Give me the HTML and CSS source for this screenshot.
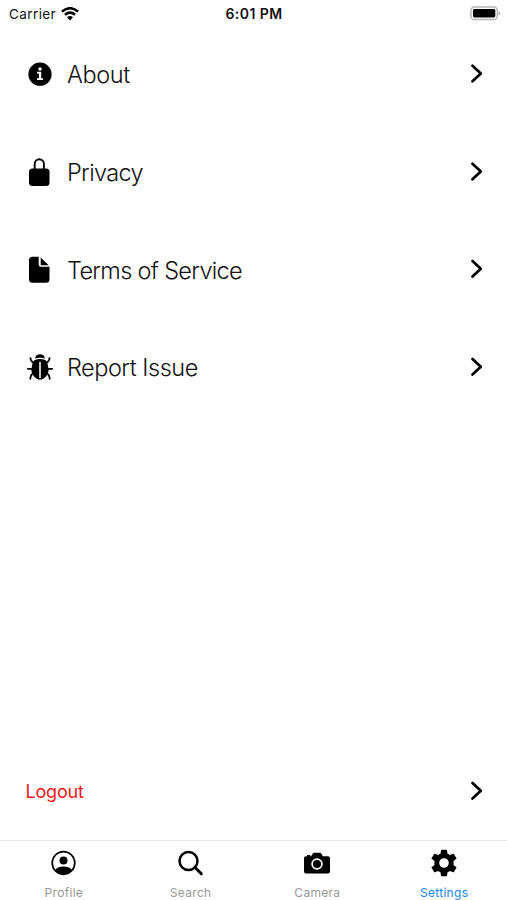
FILE: index.html
```html
<!DOCTYPE html>
<html lang="en">
<head>
<meta charset="utf-8">
<title>Settings</title>
<link rel="stylesheet" href="styles.css">
</head>
<body>
<div class="screen">
  <header class="status">
    <div class="carrier"><span>Carrier</span>
      <svg class="wifi" width="18" height="14" viewBox="0 0 18 14"><g fill="none" stroke="#000" stroke-width="2.5"><path d="M.9 4.600Q9-2.200 17.100 4.600"/><path d="M3.900 7.800Q9 3.500 14.100 7.800"/></g><path d="M6 10.300Q9 7.700 12 10.300L9 13.400z"/></svg>
    </div>
    <span class="time">6:01 PM</span>
    <svg class="battery" width="31" height="15" viewBox="0 0 31 15"><rect x=".9" y=".9" width="26.4" height="12.6" rx="3.6" fill="#fff" stroke="#b4b4b4" stroke-width="1.500"/><rect x="3" y="3" width="22.300" height="8.500" rx="1.400"/><path d="M28.600 5v4.500q1.800-.7 1.800-2.250T28.600 5z" fill="#b4b4b4"/></svg>
  </header>
  <main class="menu">
    <a class="row">
      <svg class="icon" width="26" height="30" viewBox="0 0 26 30"><circle cx="13" cy="15.200" r="11.600"/><g fill="#fff"><circle cx="13" cy="10" r="1.700"/><path d="M10 12.800h4.200v6.400H16v1.700h-6v-1.700h1.900v-4.700H10z"/></g></svg>
      <span class="label about">About</span>
      <svg class="chevron" width="14" height="20" viewBox="0 0 14 20"><path d="M2.500 1.700 10.800 9.500l-8.300 7.800"/></svg>
    </a>
    <a class="row">
      <svg class="icon" width="26" height="30" viewBox="0 0 26 30"><rect x="2" y="11.600" width="20.500" height="17.400" rx="3.500"/><path d="M7.700 13V6.800a4.600 4.600 0 0 1 9.200 0V13" fill="none" stroke="#000" stroke-width="1.900"/></svg>
      <span class="label privacy">Privacy</span>
      <svg class="chevron" width="14" height="20" viewBox="0 0 14 20"><path d="M2.500 1.700 10.800 9.500l-8.300 7.800"/></svg>
    </a>
    <a class="row">
      <svg class="icon" width="26" height="30" viewBox="0 0 26 30"><path d="M5.400 2.700h6.300v7.700a2.300 2.300 0 0 0 2.300 2.300h8.500v12.500a3.500 3.500 0 0 1-3.500 3.500H5.500A3.500 3.500 0 0 1 2 25.200V6.200A3.500 3.500 0 0 1 5.400 2.700z"/><path d="M13.700 3.500 21.700 11.300h-7.400a.6.6 0 0 1-.6-.6z"/></svg>
      <span class="label terms">Terms of Service</span>
      <svg class="chevron" width="14" height="20" viewBox="0 0 14 20"><path d="M2.500 2 10.800 9.800l-8.300 7.800"/></svg>
    </a>
    <a class="row">
      <svg class="icon" width="26" height="30" viewBox="0 0 26 30"><path d="M8.100 6.500C8.300.8 17.700.8 17.900 6.500 15.500 5.400 10.500 5.400 8.100 6.500z"/><path d="M7.200 8.200Q13 5.600 18.800 8.200 21.600 12 21.600 17.500C21.600 23 17.500 27.600 13 27.600S4.400 23 4.400 17.500Q4.400 12 7.200 8.200z"/><path d="M13 10v16" fill="none" stroke="#e8e8e8" stroke-width="1.700"/><path d="M3.500 5.300q-.3 3.500 3.500 5.700M22.500 5.300q.3 3.500-3.500 5.700M.2 16.800H6M20 16.800h5.800M6 21.500q-2.700 1.500-2.700 6M20 21.500q2.700 1.500 2.700 6" fill="none" stroke="#000" stroke-width="1.800"/></svg>
      <span class="label report">Report Issue</span>
      <svg class="chevron" width="14" height="20" viewBox="0 0 14 20"><path d="M2.500 2 10.800 9.800l-8.300 7.800"/></svg>
    </a>
  </main>
  <a class="row logout">
    <span class="label">Logout</span>
    <svg class="chevron" width="14" height="20" viewBox="0 0 14 20"><path d="M2.500 1.900 10.800 9.700l-8.300 7.800"/></svg>
  </a>
  <nav class="tabs">
    <a class="tab"><svg width="28" height="28" viewBox="0 0 28 28"><circle cx="14.500" cy="14" r="11.300" fill="none" stroke="#000" stroke-width="1.700"/><circle cx="14.500" cy="11.600" r="4"/><path d="M6.300 20.700Q8.700 17.500 14.500 17.500t8.200 3.200Q19.500 25.200 14.500 25.200t-8.200-4.500z"/></svg><span>Profile</span></a>
    <a class="tab"><svg width="28" height="28" viewBox="0 0 28 28"><g fill="none" stroke="#000"><circle cx="12.500" cy="12" r="9" stroke-width="2.500"/><path d="m19 18.500 6.300 6.300" stroke-width="3" stroke-linecap="round"/></g></svg><span>Search</span></a>
    <a class="tab"><svg width="28" height="28" viewBox="0 0 28 28"><path d="M3 7.200h1V6h3.200v1.200h.9L9.800 4.600q.4-.9 1.200-.9h6q.8 0 1.200.9l1.700 2.600H25a2 2 0 0 1 2 2v13.300a2 2 0 0 1-2 2H3a2 2 0 0 1-2-2V9.200a2 2 0 0 1 2-2z"/><circle cx="14" cy="15" r="4.900" fill="#000" stroke="#fff" stroke-width="1.700"/></svg><span>Camera</span></a>
    <a class="tab active"><svg width="28" height="28" viewBox="0 0 28 28"><path fill-rule="evenodd" d="M11.600.8h4.800q.5 0 .6.500l.5 3.400q1.300.5 2.400 1.300l3.200-1.300q.5-.2.800.3l2.500 4.300q.2.400-.2.700l-2.700 2.100q.2 1.900 0 3.800l2.700 2.100q.4.300.2.700L23.900 23q-.3.500-.8.300L19.900 22q-1.100.8-2.400 1.300l-.5 3.400q-.1.500-.6.500h-4.800q-.5 0-.6-.5l-.5-3.400Q9.200 22.800 8.100 22l-3.200 1.300q-.5.200-.8-.3L1.600 18.700q-.2-.4.200-.7l2.700-2.100q-.2-1.900 0-3.800L1.800 10q-.4-.3-.2-.7L4.100 5q.3-.5.800-.3L8.100 6q1.100-.8 2.400-1.300l.5-3.400q.1-.5.600-.5zM14 9.200a4.800 4.800 0 1 0 0 9.600 4.800 4.800 0 0 0 0-9.600z"/></svg><span>Settings</span></a>
  </nav>
</div>
</body>
</html>
```
FILE: styles.css
```css
* { box-sizing: border-box; }
body {
  margin: 0;
  background: #fff;
  color: #111;
  font-family: Inter, "Liberation Sans", sans-serif;
}
svg { display: block; flex: none; }
.screen {
  width: 507px;
  height: 900px;
  display: flex;
  flex-direction: column;
  overflow: hidden;
}
.status {
  height: 25px;
  flex: none;
  display: grid;
  grid-template-columns: 1fr auto 1fr;
  align-items: center;
  padding: 2px 6px 0 9px;
  font-size: 13.5px;
}
.carrier { display: flex; align-items: center; gap: 5px; letter-spacing: 0.4px; }
.time { font-size: 14px; font-weight: 600; letter-spacing: 0.45px; margin-left: -2px; }
.battery { justify-self: end; }
.menu { display: flex; flex-direction: column; }
.row {
  height: 97.8px;
  flex: none;
  display: flex;
  align-items: center;
  padding: 0 23px 0 27px;
}
.icon { margin-right: 14px; }
.label { font-size: 23.5px; font-weight: 300; line-height: 30px; padding-top: 2px; }
.about { letter-spacing: -0.35px; }
.privacy { letter-spacing: -0.65px; }
.terms { letter-spacing: -0.68px; padding-top: 3px; }
.report { letter-spacing: -0.48px; }
.chevron { margin-left: auto; }
.chevron path {
  fill: none;
  stroke: #000;
  stroke-width: 2.7;
  stroke-linecap: round;
  stroke-linejoin: round;
}
.logout { margin-top: auto; padding-left: 25.5px; }
.logout .label { font-size: 18px; font-weight: 400; letter-spacing: -0.2px; color: #f01818; }
.tabs {
  height: 60px;
  flex: none;
  display: grid;
  grid-template-columns: repeat(4, 1fr);
  border-top: 1px solid #e8e8e8;
}
.tab {
  display: flex;
  flex-direction: column;
  align-items: center;
  padding-top: 8px;
  gap: 8px;
  font-size: 12px;
  line-height: 16px;
  letter-spacing: 0.3px;
  color: #999;
}
.tab span { padding-left: 1px; }
.active { color: #1687f5; }
```
